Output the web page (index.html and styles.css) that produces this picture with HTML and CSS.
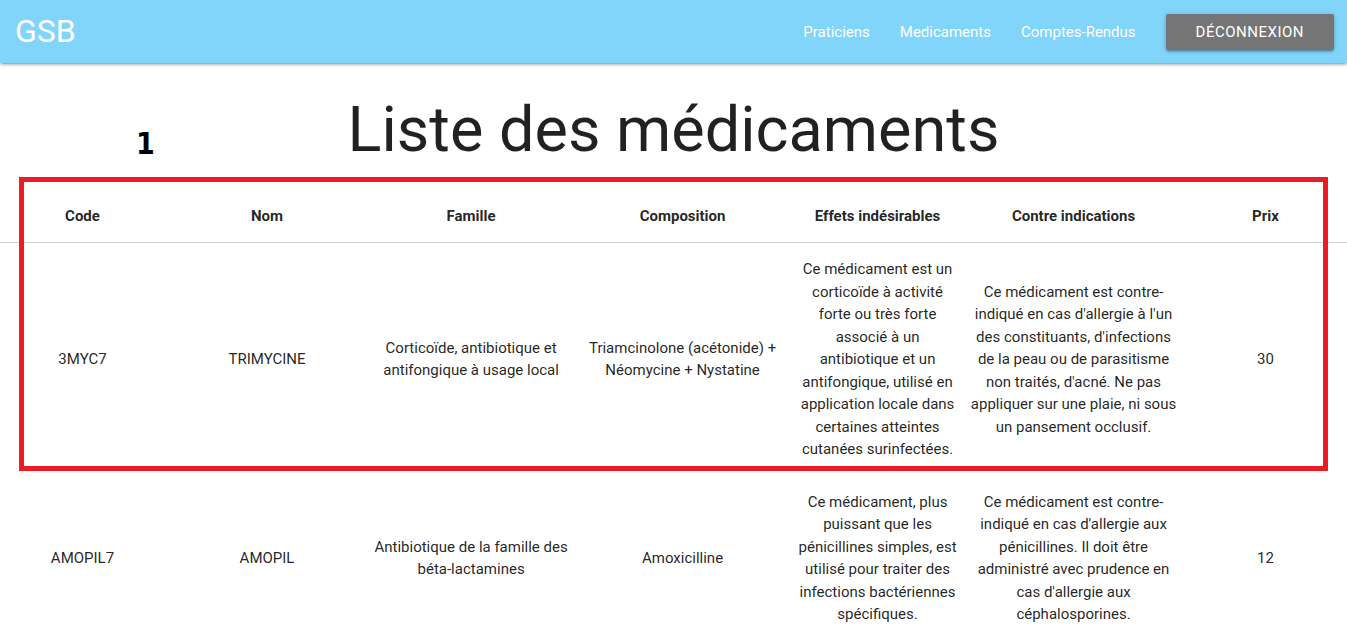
FILE: index.html
```html
<!DOCTYPE html>
<html lang="fr">
<head>
  <meta charset="utf-8">
  <meta name="viewport" content="width=device-width, initial-scale=1">
  <title>GSB - Liste des médicaments</title>
  <link rel="stylesheet" href="styles.css">
</head>
<body>
  <nav class="navbar">
    <a class="brand" href="#">GSB</a>
    <ul class="menu">
      <li><a class="menu-link" href="#">Praticiens</a></li>
      <li><a class="menu-link" href="#">Medicaments</a></li>
      <li><a class="menu-link" href="#">Comptes-Rendus</a></li>
      <li><button class="logout" type="button">DÉCONNEXION</button></li>
    </ul>
  </nav>
  <main class="page">
    <h1 class="title">Liste des médicaments</h1>
    <span class="step">1</span>
    <div class="list">
      <table class="drugs">
        <colgroup>
          <col class="col-code"><col class="col-name"><col class="col-family"><col class="col-composition"><col class="col-effects"><col class="col-contra"><col class="col-price">
        </colgroup>
        <thead>
          <tr>
            <th>Code</th>
            <th>Nom</th>
            <th>Famille</th>
            <th>Composition</th>
            <th>Effets indésirables</th>
            <th>Contre indications</th>
            <th>Prix</th>
          </tr>
        </thead>
        <tbody>
          <tr>
            <td>3MYC7</td>
            <td>TRIMYCINE</td>
            <td>Corticoïde, antibiotique et antifongique à usage local</td>
            <td>Triamcinolone (acétonide) + Néomycine + Nystatine</td>
            <td>Ce médicament est un corticoïde à activité forte ou très forte associé à un antibiotique et un antifongique, utilisé en application locale dans certaines atteintes cutanées surinfectées.</td>
            <td>Ce médicament est contre-indiqué en cas d'allergie à l'un des constituants, d'infections de la peau ou de parasitisme non traités, d'acné. Ne pas appliquer sur une plaie, ni sous un pansement occlusif.</td>
            <td>30</td>
          </tr>
          <tr>
            <td>AMOPIL7</td>
            <td>AMOPIL</td>
            <td>Antibiotique de la famille des béta-lactamines</td>
            <td>Amoxicilline</td>
            <td>Ce médicament, plus puissant que les pénicillines simples, est utilisé pour traiter des infections bactériennes spécifiques.</td>
            <td>Ce médicament est contre-indiqué en cas d'allergie aux pénicillines. Il doit être administré avec prudence en cas d'allergie aux céphalosporines.</td>
            <td>12</td>
          </tr>
        </tbody>
      </table>
      <div class="highlight"></div>
    </div>
  </main>
</body>
</html>
```

FILE: styles.css
```css
* {
  box-sizing: border-box;
}

body {
  margin: 0;
  background: #fff;
  color: rgba(0, 0, 0, 0.87);
  font-family: Roboto, sans-serif;
  font-size: 15px;
  line-height: 1.5;
}

.navbar {
  display: flex;
  align-items: flex-start;
  justify-content: space-between;
  height: 63px;
  padding: 0 13px 0 15px;
  background: #81d4fa;
  box-shadow: 0 2px 2px 0 rgba(0, 0, 0, 0.14), 0 3px 1px -2px rgba(0, 0, 0, 0.12), 0 1px 5px 0 rgba(0, 0, 0, 0.2);
}

.brand {
  color: #fff;
  font-size: 32px;
  line-height: 62px;
  text-decoration: none;
}

.menu {
  display: flex;
  align-items: center;
  margin: 0;
  padding: 0;
  list-style: none;
}

.menu-link {
  display: block;
  padding: 0 15px;
  color: #fff;
  line-height: 64px;
  text-decoration: none;
}

.logout {
  display: block;
  height: 36px;
  margin-left: 15px;
  padding: 0 30px;
  border: 0;
  border-radius: 2px;
  background: #757575;
  color: #fff;
  font: inherit;
  letter-spacing: 0.5px;
  line-height: 36px;
  cursor: pointer;
  box-shadow: 0 2px 2px 0 rgba(0, 0, 0, 0.14), 0 3px 1px -2px rgba(0, 0, 0, 0.12), 0 1px 5px 0 rgba(0, 0, 0, 0.2);
}

.page {
  position: relative;
  padding-top: 32px;
}

.title {
  margin: 0 0 26px;
  font-size: 63px;
  font-weight: 400;
  line-height: 69px;
  text-align: center;
}

.step {
  position: absolute;
  top: 63px;
  left: 136px;
  color: #000;
  font-family: "DejaVu Sans Condensed", "DejaVu Sans", sans-serif;
  font-size: 30px;
  font-weight: 700;
  line-height: 36px;
}

.list {
  position: relative;
}

.drugs {
  width: 100%;
  border-collapse: collapse;
  table-layout: fixed;
}

.drugs thead {
  border-bottom: 1px solid #d0d0d0;
}

.drugs th,
.drugs td {
  padding: 15px 5px;
  text-align: center;
  vertical-align: middle;
}

.drugs th {
  font-weight: 700;
  line-height: 22px;
}

.col-code {
  width: 12.25%;
}

.col-name,
.col-family {
  width: 15.15%;
}

.col-composition {
  width: 16.25%;
}

.col-effects {
  width: 12.7%;
}

.col-contra {
  width: 16.4%;
}

.col-price {
  width: 12.1%;
}

.highlight {
  position: absolute;
  top: -13px;
  right: 19px;
  left: 19px;
  height: 294px;
  border: 5px solid #ed1c24;
  pointer-events: none;
}
```
